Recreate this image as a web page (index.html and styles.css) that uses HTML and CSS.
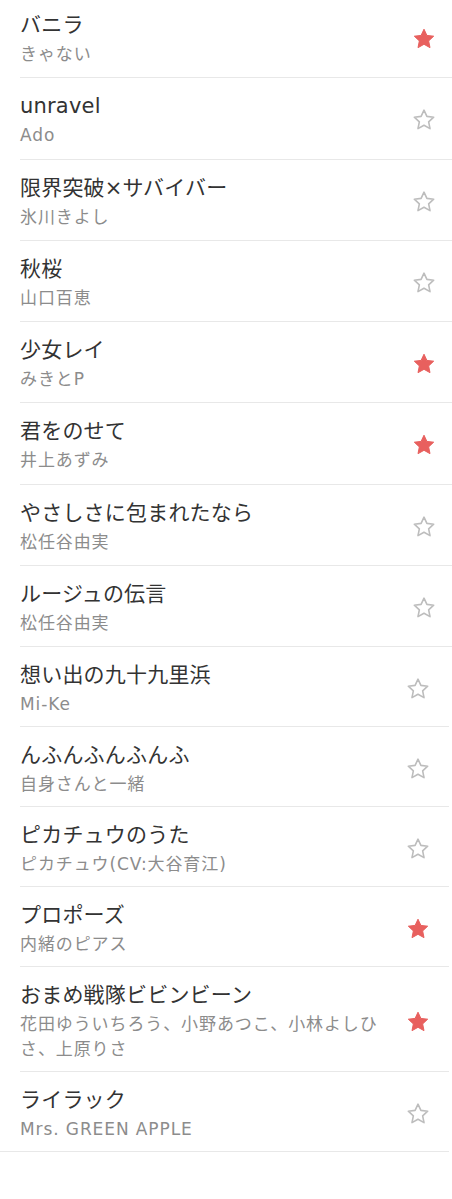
FILE: index.html
```html
<!DOCTYPE html>
<html lang="ja">
<head>
  <meta charset="utf-8">
  <link rel="stylesheet" href="styles.css">
</head>
<body>
  <svg width="0" height="0" class="defs">
    <defs>
      <path id="star" d="M12 2.2l2.9 6.2 6.8.8-5.05 4.7 1.35 6.75L12 17.3l-6 3.35 1.35-6.75L2.3 9.2l6.8-.8z"/>
    </defs>
  </svg>

  <ul class="song-list top">
    <li class="song">
      <div class="song-info">
        <div class="song-title">バニラ</div>
        <div class="song-artist">きゃない</div>
      </div>
      <button class="fav on"><svg viewBox="0 0 24 24"><use href="#star"/></svg></button>
    </li>
    <li class="song">
      <div class="song-info">
        <div class="song-title">unravel</div>
        <div class="song-artist">Ado</div>
      </div>
      <button class="fav"><svg viewBox="0 0 24 24"><use href="#star"/></svg></button>
    </li>
    <li class="song">
      <div class="song-info">
        <div class="song-title">限界突破×サバイバー</div>
        <div class="song-artist">氷川きよし</div>
      </div>
      <button class="fav"><svg viewBox="0 0 24 24"><use href="#star"/></svg></button>
    </li>
    <li class="song">
      <div class="song-info">
        <div class="song-title">秋桜</div>
        <div class="song-artist">山口百恵</div>
      </div>
      <button class="fav"><svg viewBox="0 0 24 24"><use href="#star"/></svg></button>
    </li>
    <li class="song">
      <div class="song-info">
        <div class="song-title">少女レイ</div>
        <div class="song-artist">みきとP</div>
      </div>
      <button class="fav on"><svg viewBox="0 0 24 24"><use href="#star"/></svg></button>
    </li>
    <li class="song">
      <div class="song-info">
        <div class="song-title">君をのせて</div>
        <div class="song-artist">井上あずみ</div>
      </div>
      <button class="fav on"><svg viewBox="0 0 24 24"><use href="#star"/></svg></button>
    </li>
    <li class="song">
      <div class="song-info">
        <div class="song-title">やさしさに包まれたなら</div>
        <div class="song-artist">松任谷由実</div>
      </div>
      <button class="fav"><svg viewBox="0 0 24 24"><use href="#star"/></svg></button>
    </li>
    <li class="song">
      <div class="song-info">
        <div class="song-title">ルージュの伝言</div>
        <div class="song-artist">松任谷由実</div>
      </div>
      <button class="fav"><svg viewBox="0 0 24 24"><use href="#star"/></svg></button>
    </li>
  </ul>

  <ul class="song-list bottom">
    <li class="song">
      <div class="song-info">
        <div class="song-title">想い出の九十九里浜</div>
        <div class="song-artist">Mi-Ke</div>
      </div>
      <button class="fav"><svg viewBox="0 0 24 24"><use href="#star"/></svg></button>
    </li>
    <li class="song">
      <div class="song-info">
        <div class="song-title">んふんふんふんふ</div>
        <div class="song-artist">自身さんと一緒</div>
      </div>
      <button class="fav"><svg viewBox="0 0 24 24"><use href="#star"/></svg></button>
    </li>
    <li class="song">
      <div class="song-info">
        <div class="song-title">ピカチュウのうた</div>
        <div class="song-artist">ピカチュウ(CV:大谷育江)</div>
      </div>
      <button class="fav"><svg viewBox="0 0 24 24"><use href="#star"/></svg></button>
    </li>
    <li class="song">
      <div class="song-info">
        <div class="song-title">プロポーズ</div>
        <div class="song-artist">内緒のピアス</div>
      </div>
      <button class="fav on"><svg viewBox="0 0 24 24"><use href="#star"/></svg></button>
    </li>
    <li class="song">
      <div class="song-info">
        <div class="song-title">おまめ戦隊ビビンビーン</div>
        <div class="song-artist">花田ゆういちろう、小野あつこ、小林よしひさ、上原りさ</div>
      </div>
      <button class="fav on"><svg viewBox="0 0 24 24"><use href="#star"/></svg></button>
    </li>
    <li class="song">
      <div class="song-info">
        <div class="song-title">ライラック</div>
        <div class="song-artist">Mrs. GREEN APPLE</div>
      </div>
      <button class="fav"><svg viewBox="0 0 24 24"><use href="#star"/></svg></button>
    </li>
  </ul>
</body>
</html>
```

FILE: styles.css
```css
body {
  margin: 0;
  background: #fff;
  font-family: "DejaVu Sans", "Noto Sans CJK JP", sans-serif;
  color: #333;
}

.defs {
  position: absolute;
}

.song-list {
  list-style: none;
  margin: 0;
  padding: 0;
}

.song-list.top {
  margin-top: -3px;
}

.song {
  display: flex;
  align-items: center;
  margin-left: 20px;
  padding: 14px 0 10.3px;
  border-bottom: 1px solid #e8e8e8;
}

.song-info {
  flex: 1;
  min-width: 0;
}

.song-title {
  font-size: 21px;
  line-height: 28px;
  letter-spacing: 0.2px;
  color: #333;
}

.song-artist {
  margin-top: 3px;
  font-size: 17px;
  line-height: 25px;
  letter-spacing: 0.9px;
  color: #8c8c8c;
}

.fav {
  flex: none;
  width: 24px;
  height: 24px;
  margin: 0 16px 0 14px;
  padding: 0;
  border: none;
  background: none;
  cursor: pointer;
}

.fav svg {
  display: block;
  width: 24px;
  height: 24px;
  fill: none;
  stroke: #bdbdbd;
  stroke-width: 1.6;
  stroke-linejoin: round;
}

.fav.on svg {
  fill: #e8605e;
  stroke: #e8605e;
  stroke-width: 1;
}

/* second half of the list sits a touch tighter */
.song-list.bottom {
  margin-right: 3px;
  border-bottom: 1px solid #e8e8e8;
}

.song-list.bottom .song {
  padding-bottom: 9px;
}

.song-list.bottom .song:last-child {
  border-bottom: none;
}

.song-list.bottom .fav {
  margin-right: 19px;
}
```
